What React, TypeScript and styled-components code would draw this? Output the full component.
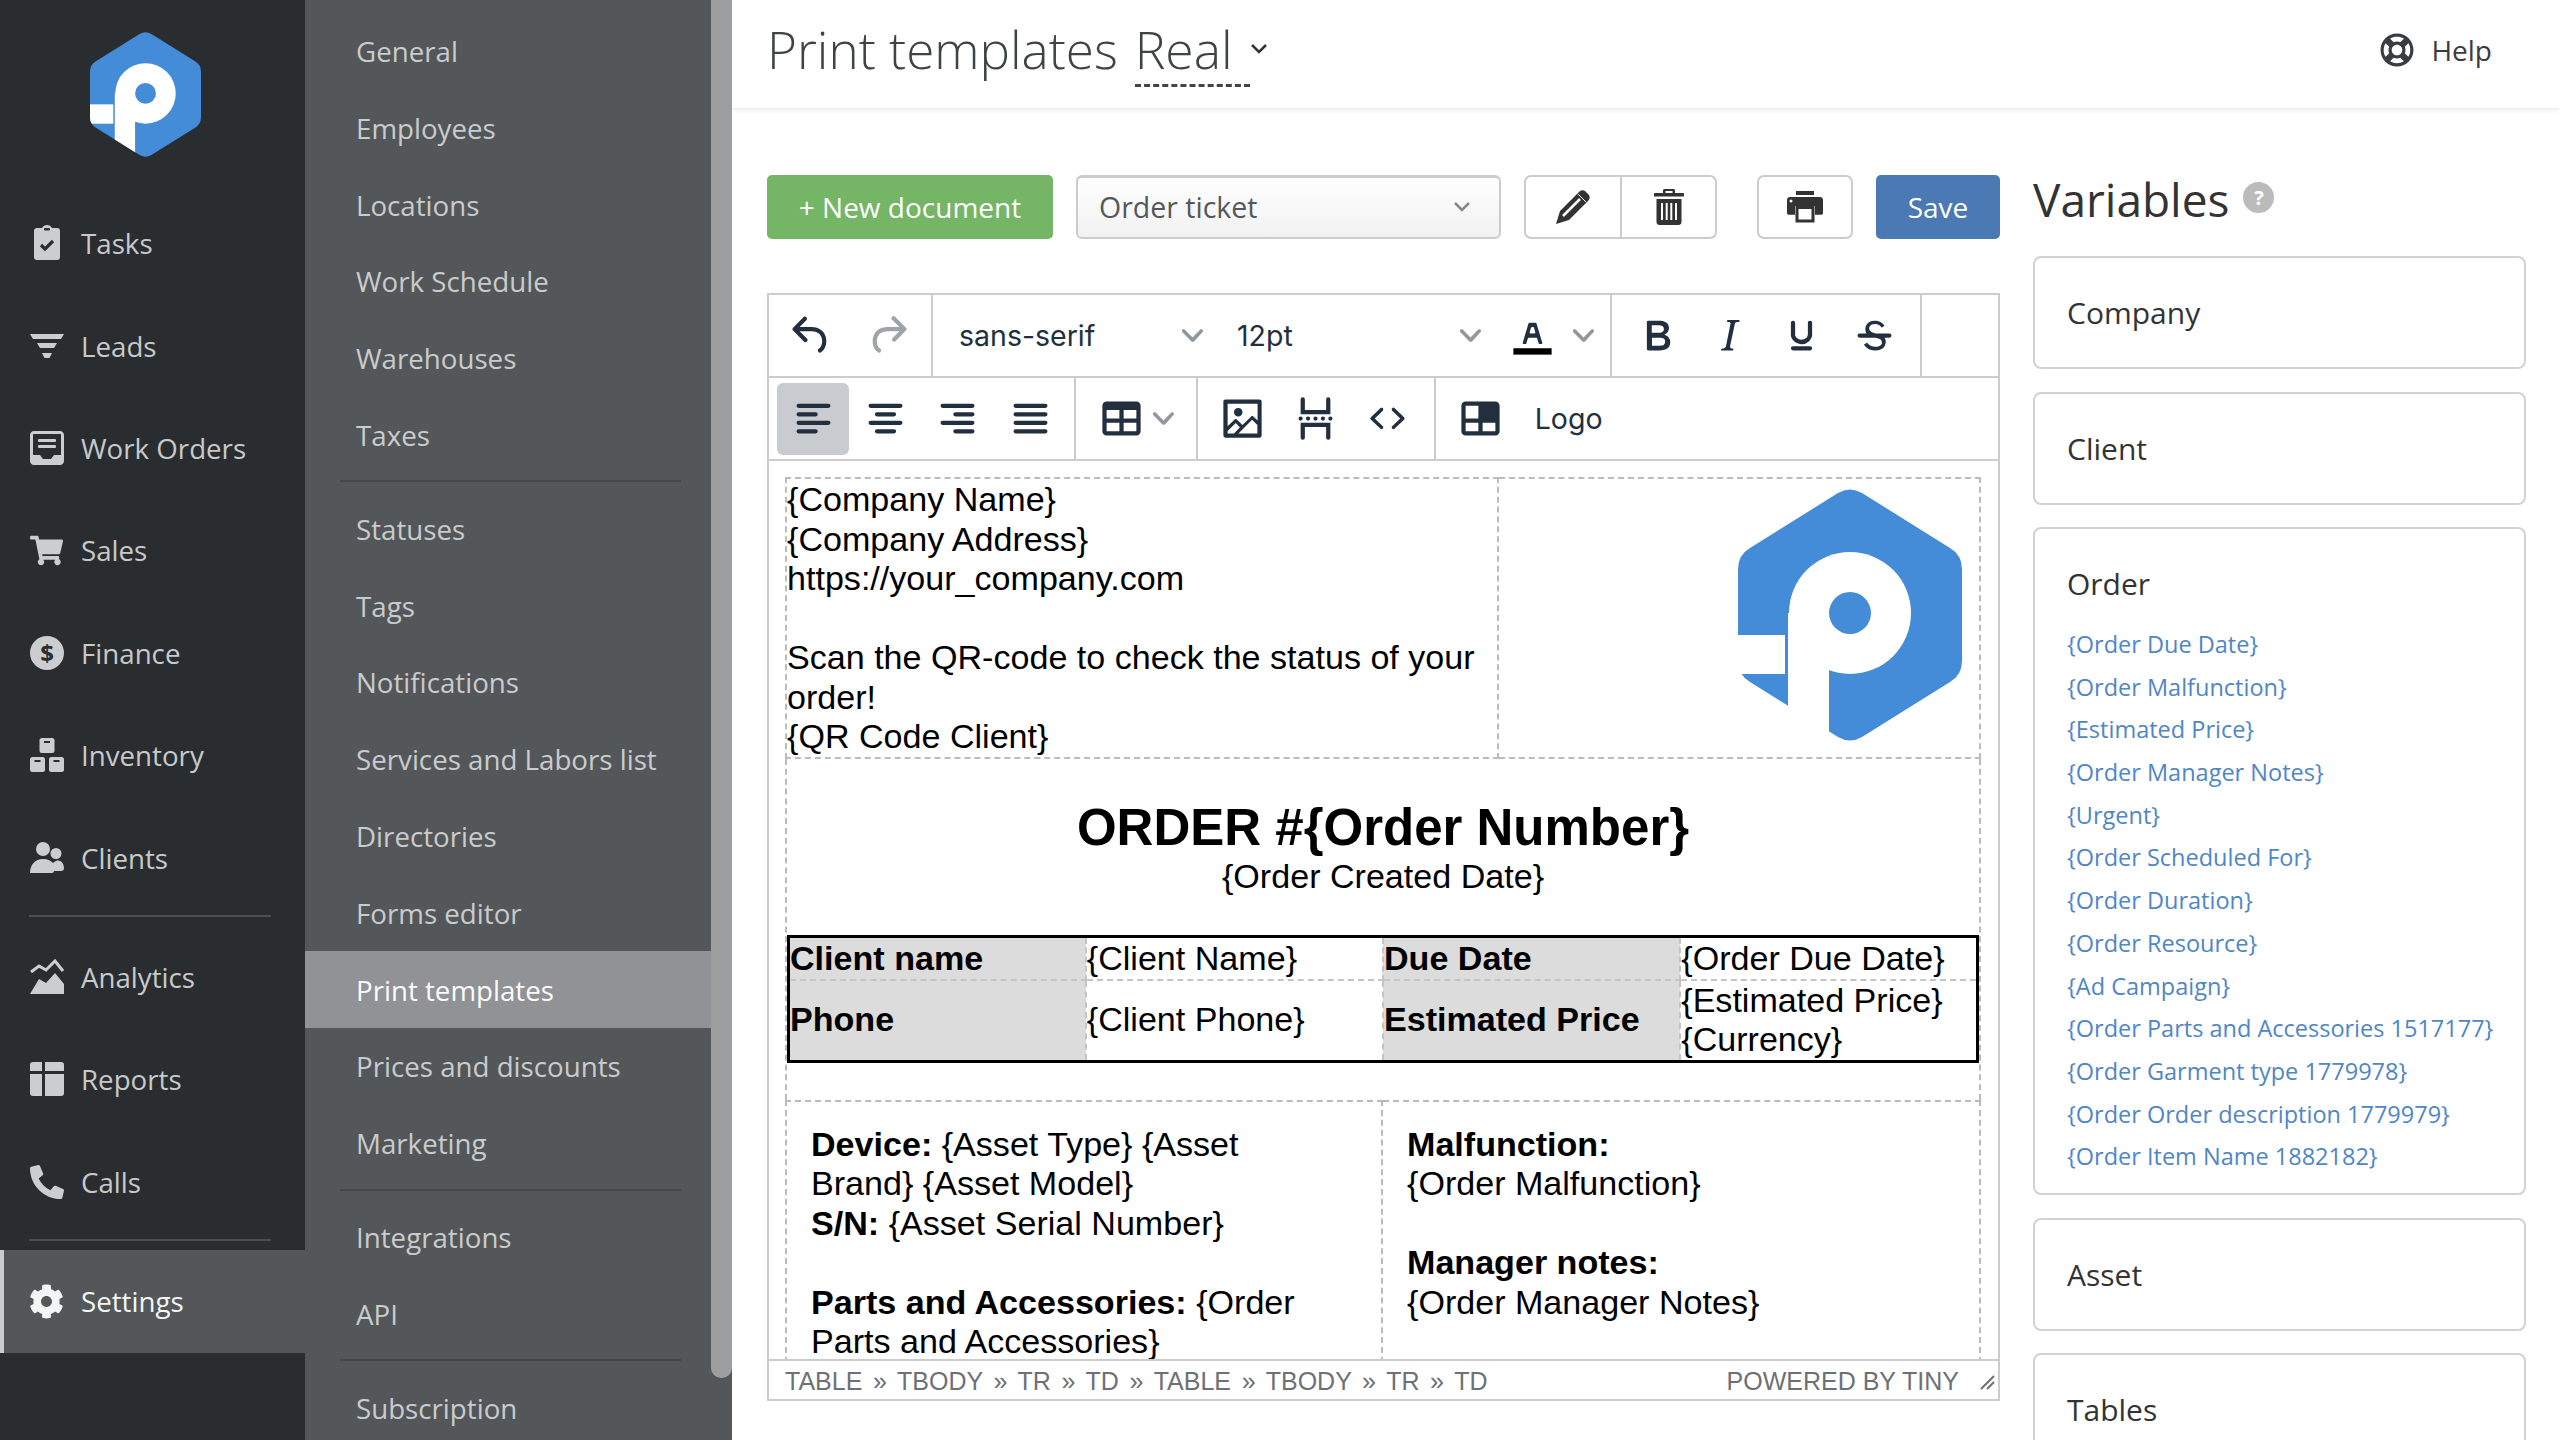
import React from "react";
import styled, { createGlobalStyle } from "styled-components";
import { FaShoppingCart, FaCog, FaRegLifeRing, FaPhoneAlt } from "react-icons/fa";

const Global = createGlobalStyle`
  html, body { margin: 0; padding: 0; height: 1440px; overflow: hidden; background: #fff; }
  body { font-family: "Open Sans", "Liberation Sans", sans-serif; }
  * { box-sizing: border-box; }
`;

const Page = styled.div`
  display: flex;
  width: 2560px;
  height: 1440px;
  overflow: hidden;
`;

/* ---------- primary nav ---------- */
const Nav = styled.nav`
  width: 305px;
  flex: none;
  background: #2a2d30;
  display: flex;
  flex-direction: column;
`;
const LogoBox = styled.div`
  height: 192px;
  padding: 32px 0 0 90px;
`;
const NavRow = styled.div<{ $active?: boolean }>`
  height: ${(p) => (p.$active ? "103px" : "102.4px")};
  display: flex;
  align-items: center;
  gap: 17px;
  padding-left: ${(p) => (p.$active ? "25px" : "29px")};
  font-size: 27.7px;
  color: ${(p) => (p.$active ? "#f4f5f5" : "#c7c9cb")};
  background: ${(p) => (p.$active ? "#53575a" : "transparent")};
  border-left: ${(p) => (p.$active ? "4px solid #c9cbcd" : "none")};
  flex: none;
`;
const NavIconBox = styled.span`
  width: 35px;
  height: 36px;
  display: flex;
  align-items: center;
  justify-content: center;
  flex: none;
  color: #cbcdcf;
`;
const NavDivider = styled.div<{ $after: number }>`
  height: 2px;
  width: 242px;
  margin: 6px 0 ${(p) => p.$after}px 29px;
  background: #4c5053;
  flex: none;
`;

/* ---------- secondary nav ---------- */
const SubPanel = styled.aside`
  width: 427px;
  flex: none;
  background: #53575a;
  display: flex;
`;
const SubList = styled.div`
  width: 406px;
  padding-top: 12.6px;
  flex: none;
`;
const SubRow = styled.div<{ $active?: boolean }>`
  height: 76.8px;
  display: flex;
  align-items: center;
  padding-left: 51px;
  font-size: 27.7px;
  color: ${(p) => (p.$active ? "#fbfbfb" : "#c9cbcc")};
  background: ${(p) => (p.$active ? "#909295" : "transparent")};
`;
const SubDivider = styled.div`
  height: 2px;
  margin: 7px 30px 8px 35px;
  background: #43474a;
`;
const ScrollThumb = styled.div`
  width: 21px;
  height: 1378px;
  background: #9c9e9f;
  border-radius: 0 0 10px 10px;
  flex: none;
`;

/* ---------- main ---------- */
const Main = styled.main`
  flex: 1;
  min-width: 0;
  display: flex;
  flex-direction: column;
  overflow: hidden;
`;
const Header = styled.header`
  height: 108px;
  flex: none;
  display: flex;
  align-items: flex-start;
  padding: 14px 68px 0 35px;
  box-shadow: 0 2px 5px rgba(0, 0, 0, 0.09);
  color: #3f4346;
`;
const Title = styled.h1`
  margin: 0 17px 0 0;
  font-size: 51.2px;
  font-weight: 300;
  line-height: 70px;
`;
const TitleSelect = styled.span`
  font-size: 51.5px;
  font-weight: 300;
  line-height: 70px;
  height: 73px;
  border-bottom: 3px dashed #444;
  width: 115px;
`;
const TitleCaret = styled.svg`
  margin: 29px 0 0 0;
`;
const HelpLink = styled.div`
  margin-left: auto;
  height: 72px;
  display: flex;
  align-items: center;
  gap: 17px;
  font-size: 28px;
  color: #3a3d40;
`;
const Body = styled.div`
  flex: 1;
  min-height: 0;
  display: flex;
  gap: 33px;
  padding: 67px 34px 0 35px;
`;
const LeftCol = styled.div`
  width: 1233px;
  flex: none;
`;
const RightCol = styled.div`
  flex: 1;
  min-width: 0;
`;
const ActionBar = styled.div`
  height: 64px;
  display: flex;
  margin-bottom: 54px;
`;
const SolidButton = styled.button<{ $color: string; $width: number; $gap: number }>`
  width: ${(p) => p.$width}px;
  margin-right: ${(p) => p.$gap}px;
  height: 64px;
  border: none;
  border-radius: 5px;
  background: ${(p) => p.$color};
  color: #fff;
  font: 500 28px "Open Sans", sans-serif;
  padding: 0;
`;
const SelectBox = styled.div`
  width: 425px;
  margin-right: 23px;
  height: 64px;
  border: 2px solid #ccc;
  border-top-width: 3px;
  border-radius: 6px;
  background: linear-gradient(#fff, #f1f1f1);
  display: flex;
  align-items: center;
  justify-content: space-between;
  padding: 0 27px 2px 21px;
  font-size: 28.5px;
  color: #55585b;
`;
const IconGroup = styled.div<{ $gap: number }>`
  display: flex;
  height: 64px;
  margin-right: ${(p) => p.$gap}px;
  border: 2px solid #ccc;
  border-radius: 7px;
`;
const IconButton = styled.div<{ $width: number; $split?: boolean }>`
  width: ${(p) => p.$width}px;
  display: flex;
  align-items: center;
  justify-content: center;
  border-left: ${(p) => (p.$split ? "2px solid #ccc" : "none")};
`;

/* ---------- editor ---------- */
const Editor = styled.div`
  height: 1108px;
  border: 2px solid #ccc;
  display: flex;
  flex-direction: column;
`;
const ToolRow = styled.div`
  height: 83px;
  flex: none;
  display: flex;
  border-bottom: 2px solid #ccc;
`;
const ToolGroup = styled.div<{ $pl: number; $pr?: number }>`
  display: flex;
  align-items: center;
  padding: 0 ${(p) => p.$pr ?? 0}px 0 ${(p) => p.$pl}px;
  border-right: 2px solid #ccc;
  flex: none;
`;
const LastGroup = styled(ToolGroup)`
  border-right: none;
`;
const ToolButton = styled.div<{ $w?: number; $active?: boolean }>`
  width: ${(p) => p.$w ?? 72.4}px;
  height: 72px;
  display: flex;
  align-items: center;
  justify-content: center;
  border-radius: 6px;
  background: ${(p) => (p.$active ? "#c8cbcf" : "transparent")};
  flex: none;
`;
const FontSelect = styled.div`
  width: 278px;
  height: 72px;
  display: flex;
  align-items: center;
  justify-content: space-between;
  padding: 0 8px 0 26px;
  font: 400 28.5px Inter, "Liberation Sans", sans-serif;
  color: #222f3e;
  flex: none;
`;
const ToolLabel = styled.span`
  font: 400 28.5px Inter, "Liberation Sans", sans-serif;
  color: #222f3e;
  margin-left: 18px;
`;
const Chevron = styled.svg<{ $ml?: number }>`
  fill: rgba(34, 47, 62, 0.5);
  margin-left: ${(p) => p.$ml ?? 0}px;
  flex: none;
`;
const Content = styled.div`
  flex: 1;
  min-height: 0;
  overflow: hidden;
  padding: 16px 17px 0 16px;
  font: 400 34.1px/39.5px "Liberation Sans", Arial, sans-serif;
  color: #000;
`;
const DocTable = styled.table`
  width: 100%;
  table-layout: fixed;
  border-collapse: collapse;
  & > tbody > tr > td {
    border: 2px dashed #bbb;
    vertical-align: top;
  }
`;
const PlainCell = styled.td<{ $width?: number }>`
  padding: 1px 0 0 0;
  width: ${(p) => (p.$width ? `${p.$width}px` : "auto")};
  height: 279px;
`;
const LogoCell = styled.td`
  padding: 10px 17px 0 0;
  text-align: right;
`;
const PadCell = styled.td<{ $width?: number }>`
  padding: 23px 48px 0 24px;
  height: 320px;
  width: ${(p) => (p.$width ? `${p.$width}px` : "auto")};
`;
const Line = styled.div`
  min-height: 39.5px;
`;
const Middle = styled.div`
  height: 341px;
  border-left: 2px dashed #bbb;
  border-right: 2px dashed #bbb;
  padding-top: 39px;
`;
const OrderTitle = styled.div`
  font-size: 51px;
  font-weight: 700;
  line-height: 59px;
  text-align: center;
`;
const OrderDate = styled.div`
  text-align: center;
  line-height: 39px;
  margin-bottom: 39.5px;
`;
const InfoTable = styled.table`
  width: 100%;
  table-layout: fixed;
  border-collapse: collapse;
  border: 3px solid #000;
`;
const InfoCell = styled.td<{ $label?: boolean; $tall?: boolean }>`
  background: ${(p) => (p.$label ? "#dcdcdc" : "#fff")};
  font-weight: ${(p) => (p.$label ? 700 : 400)};
  border: 2px dashed #c4c4c4;
  padding: 0;
  height: ${(p) => (p.$tall ? "80px" : "43px")};
`;
const StatusBar = styled.div`
  height: 40px;
  flex: none;
  border-top: 2px solid #ccc;
  display: flex;
  align-items: center;
  padding: 2px 2px 0 16px;
  font: 400 25px "Liberation Sans", Arial, sans-serif;
  color: #6d7176;
`;
const CrumbPath = styled.span`
  word-spacing: 3.7px;
`;
const PoweredBy = styled.span`
  margin-left: auto;
  margin-right: 17px;
`;

/* ---------- variables ---------- */
const VarHead = styled.div`
  height: 48px;
  margin-bottom: 33px;
  display: flex;
  align-items: center;
  gap: 14px;
  font-size: 46px;
  font-weight: 400;
  color: #333;
`;
const HintDot = styled.span`
  width: 31px;
  height: 31px;
  border-radius: 50%;
  background: #bbb;
  color: #fff;
  font-size: 20px;
  font-weight: 700;
  display: flex;
  align-items: center;
  justify-content: center;
  margin-top: -3px;
`;
const Card = styled.section<{ $open?: boolean }>`
  border: 2px solid #d2d2d2;
  border-radius: 8px;
  padding: ${(p) => (p.$open ? "35px 32px 0" : "0 32px")};
  height: ${(p) => (p.$open ? "668px" : "113px")};
  margin-bottom: 22.5px;
  display: ${(p) => (p.$open ? "block" : "flex")};
  align-items: center;
  font-size: 30px;
  color: #333;
`;
const CardTitle = styled.div`
  font-size: 30px;
  line-height: 40px;
  margin-bottom: 19px;
`;
const VarLink = styled.div`
  height: 42.7px;
  line-height: 42.7px;
  font-size: 23.5px;
  color: #4f86c6;
  white-space: nowrap;
`;

/* ---------- drawings ---------- */
const Logo = ({ size, onWhite }: { size: number; onWhite?: boolean }) => {
  const id = `hex${size}`;
  const hex =
    "M100 2Q112 -5 124 2L212 57Q224 64 224 78V170Q224 184 212 191L124 246Q112 253 100 246L12 191Q0 184 0 170V78Q0 64 12 57Z";
  return (
    <svg width={size} height={(size * 252) / 224} viewBox="0 -2 224 252">
      <defs>
        <clipPath id={id}>
          <path d={hex} />
        </clipPath>
      </defs>
      <path d={hex} fill="#448bd8" />
      <g clipPath={onWhite ? undefined : `url(#${id})`} fill="#fff">
        <circle cx="112" cy="122" r="61" />
        <rect x="50" y="122" width="41" height="130" />
        <rect x={onWhite ? -2 : 0} y="144" width={onWhite ? 49 : 47} height="39" />
      </g>
      <circle cx="112" cy="122" r="21" fill="#448bd8" />
    </svg>
  );
};

const NI = ({ children }: { children: React.ReactNode }) => (
  <svg width="34" height="36" viewBox="0 0 34 36" fill="currentColor">
    {children}
  </svg>
);

const navIcons: Record<string, React.ReactNode> = {
  Tasks: (
    <NI>
      <path d="M7 3h5c1-2 3-3 5-3s4 1 5 3h5c2 0 3 1 3 3v26c0 2-1 3-3 3H7c-2 0-3-1-3-3V6c0-2 1-3 3-3z" />
      <rect x="14" y="3" width="6" height="2.4" rx="1.2" fill="#2a2d30" />
      <path d="M11 20l4 4 8-8" fill="none" stroke="#2a2d30" strokeWidth="3.2" />
    </NI>
  ),
  Leads: (
    <NI>
      <path d="M0 6h34l-3 5H3zM7 15h20l-3 5H10zM12 25h10l-2.5 5h-5z" />
    </NI>
  ),
  "Work Orders": (
    <NI>
      <path fillRule="evenodd" d="M4 1h26c2.2 0 4 1.8 4 4v26c0 2.2-1.800 4-4 4H4c-2.200 0-4-1.800-4-4V5c0-2.200 1.800-4 4-4zM3 5v20h7l3 4h8l3-4h7V5c0-.6-.4-1-1-1H4c-.6 0-1 .4-1 1z" />
      <rect x="8" y="9" width="18" height="3" rx="1" />
      <rect x="8" y="15" width="18" height="3" rx="1" />
    </NI>
  ),
  Sales: <FaShoppingCart size={33} />,
  Finance: (
    <NI>
      <circle cx="17" cy="18" r="17" />
      <text x="17" y="26.500" textAnchor="middle" fontSize="24" fontWeight="700" fill="#2a2d30" fontFamily="Open Sans, sans-serif">$</text>
    </NI>
  ),
  Inventory: (
    <NI>
      <rect x="9.500" y="1" width="15" height="15" rx="2.500" />
      <rect x="0" y="20" width="15" height="15" rx="2.500" />
      <rect x="19" y="20" width="15" height="15" rx="2.500" />
      <rect x="14" y="4" width="6" height="2" fill="#2a2d30" />
      <rect x="4.500" y="23" width="6" height="2" fill="#2a2d30" />
      <rect x="23.500" y="23" width="6" height="2" fill="#2a2d30" />
    </NI>
  ),
  Clients: (
    <NI>
      <circle cx="13" cy="9" r="7" />
      <circle cx="26" cy="13.500" r="5.500" />
      <path d="M0 33c0-8 5-14 13-14 5 0 8 2 10 4 2-2 4-2.500 5-2.500 3.500 0 6 3.500 6 7.500 0 2-1 3-3 3H24c0 1-1 2-2 2H2c-1 0-2 0-2 0z" />
    </NI>
  ),
  Analytics: (
    <NI>
      <path d="M1 13l8-6 7 4 9-9 8 10" fill="none" stroke="currentColor" strokeWidth="3" />
      <path d="M0 35l9-15 7 4 9-10 9 11v10z" />
    </NI>
  ),
  Reports: (
    <NI>
      <path d="M3 1h9v9H0V4c0-2 1-3 3-3zM15 1h16c2 0 3 1 3 3v6H15zM0 13h12v22H3c-2 0-3-1-3-3zM15 13h19v19c0 2-1 3-3 3H15z" />
    </NI>
  ),
  Calls: <FaPhoneAlt size={34} />,
  Settings: <FaCog size={35} color="#f4f5f5" />,
};

const Pencil = () => (
  <svg width="36" height="36" viewBox="0 0 36 36">
    <path d="M1 35l4-13L24 3c2-2 4-2 6-1l4 4c1 2 1 4-1 6L14 31z" fill="#333" />
    <path d="M8 27L25 10" stroke="#fff" strokeWidth="2.500" />
    <path d="M23 5l8 8" stroke="#fff" strokeWidth="1" />
  </svg>
);
const Trash = () => (
  <svg width="30" height="36" viewBox="0 0 30 36">
    <path d="M9 4V1.500C9 .7 9.700 0 10.500 0h9c.8 0 1.500.7 1.500 1.500V4h8c.6 0 1 .4 1 1v2.500H0V5c0-.6.4-1 1-1zM11.500 4h7V2h-7z" fill="#333" fillRule="evenodd" />
    <path d="M2.500 10h25v23c0 1.700-1.300 3-3 3h-19c-1.700 0-3-1.300-3-3z" fill="#333" />
    <path d="M8 14v17M12.700 14v17M17.300 14v17M22 14v17" stroke="#fff" strokeWidth="2" />
  </svg>
);
const Printer = () => (
  <svg width="36" height="32" viewBox="0 0 36 32">
    <rect x="9" y="0" width="18" height="4" fill="#333" />
    <path d="M3 6h30c1.700 0 3 1.300 3 3v13c0 1-.7 1.700-1.700 1.700H28V15H8v8.700H1.700C.7 23.700 0 23 0 22V9c0-1.700 1.300-3 3-3z" fill="#333" />
    <circle cx="4" cy="10" r="1.500" fill="#fff" />
    <path d="M10 16.500h16V30H10z" fill="#fff" stroke="#333" strokeWidth="3" />
  </svg>
);

const T = ({ d, fill = "#222f3e", rule = "evenodd" }: { d: string; fill?: string; rule?: "evenodd" | "nonzero" }) => (
  <svg width="51" height="51" viewBox="0 0 24 24" fill={fill}>
    <path d={d} fillRule={rule} />
  </svg>
);
const Chev = ({ ml }: { ml?: number }) => (
  <Chevron $ml={ml} width="21" height="21" viewBox="0 0 10 10">
    <path d="M8.700 2.200c.3-.3.8-.3 1 0 .4.4.4.9 0 1.200L5.700 7.800c-.3.3-.9.3-1.200 0L.2 3.400a.8.8 0 0 1 0-1.200c.3-.3.8-.3 1.100 0L5 6l3.700-3.800z" />
  </Chevron>
);
const P = {
  undo: "M6.400 8H12c3.700 0 6.200 2 6.800 5.100.6 2.700-.4 5.600-2.300 6.800a1 1 0 0 1-1-1.800c1.100-.6 1.800-2.700 1.400-4.600-.5-2.100-2.100-3.500-4.900-3.500H6.400l3.300 3.300a1 1 0 1 1-1.400 1.400l-5-5a1 1 0 0 1 0-1.400l5-5a1 1 0 0 1 1.400 1.400L6.400 8z",
  redo: "M17.600 10H12c-2.800 0-4.400 1.400-4.900 3.500-.4 2 .3 4 1.400 4.600a1 1 0 1 1-1 1.800c-2-1.200-2.900-4.100-2.300-6.800.6-3 3-5.100 6.800-5.100h5.600l-3.300-3.300a1 1 0 1 1 1.400-1.400l5 5a1 1 0 0 1 0 1.400l-5 5a1 1 0 0 1-1.400-1.400l3.300-3.300z",
  bold: "M7.800 19c-.3 0-.5 0-.6-.2l-.2-.5V5.700c0-.2 0-.4.2-.5l.6-.2h5c1.500 0 2.700.3 3.500 1 .7.600 1.100 1.400 1.100 2.500a3 3 0 0 1-.6 1.900c-.4.600-1 1-1.600 1.200.4.100.9.300 1.300.6s.8.7 1 1.200c.4.400.5 1 .5 1.600 0 1.300-.4 2.300-1.300 3-.8.700-2.100 1-3.800 1H7.800zm5-8.300c.6 0 1.200-.1 1.600-.5.4-.3.6-.7.6-1.300 0-1.100-.8-1.700-2.300-1.700H9.300v3.500h3.400zm.5 6c.7 0 1.300-.1 1.700-.4.4-.4.600-.9.600-1.500s-.2-1-.7-1.400c-.4-.3-1-.4-2-.4H9.400v3.800h4z",
  italic: "M16.700 4.700l-.1.9h-.3c-.6 0-1 0-1.400.3-.3.3-.4.6-.5 1.100l-2.100 9.800v.6c0 .5.4.8 1.400.8h.2l-.2.8H8l.2-.8h.2c1.100 0 1.800-.5 2-1.500l2-9.800.1-.5c0-.6-.4-.8-1.400-.8h-.3l.2-.9h5.800z",
  underline: "M16 5c.6 0 1 .4 1 1v5.500a4 4 0 0 1-.4 1.800l-1 1.400a5.300 5.300 0 0 1-5.500 1 5 5 0 0 1-1.600-1c-.5-.4-.8-.9-1.100-1.400a4 4 0 0 1-.4-1.800V6c0-.6.4-1 1-1s1 .4 1 1v5.500c0 .3 0 .6.2 1l.6.7a3.300 3.300 0 0 0 2.200.8 3.400 3.400 0 0 0 2.200-.8c.3-.2.4-.5.6-.8l.2-.9V6c0-.6.4-1 1-1zM8 17h8c.6 0 1 .4 1 1s-.4 1-1 1H8a1 1 0 0 1 0-2z",
  strike: "M15.600 8.500c-.5-.7-1-1.100-1.300-1.300-.6-.4-1.300-.6-2-.6-2.700 0-2.800 1.700-2.800 2.100 0 1.600 1.800 2 3.200 2.300 4.400.9 4.600 2.800 4.600 3.900 0 1.400-.7 4.100-5 4.100A6.200 6.200 0 0 1 7 16.400l1.500-1.100c.4.600 1.600 2 3.700 2 1.600 0 2.500-.4 3-1 .3-.4.3-.7.3-1 0-1-.3-1.700-3-2.300-1.900-.4-4.800-1-4.800-4 0-.2 0-3.900 4.500-3.900 1.200 0 2.200.3 3 .8.500.4 1 .8 1.500 1.500l-1.400 1zM5 11h14a1 1 0 0 1 0 2H5a1 1 0 0 1 0-2z",
  left: "M5 5h14a1 1 0 0 1 0 2H5a1 1 0 0 1 0-2zm0 4h8a1 1 0 0 1 0 2H5a1 1 0 0 1 0-2zm0 4h14a1 1 0 0 1 0 2H5a1 1 0 0 1 0-2zm0 4h8a1 1 0 0 1 0 2H5a1 1 0 0 1 0-2z",
  center: "M5 5h14a1 1 0 0 1 0 2H5a1 1 0 0 1 0-2zm3 4h8a1 1 0 0 1 0 2H8a1 1 0 0 1 0-2zm-3 4h14a1 1 0 0 1 0 2H5a1 1 0 0 1 0-2zm3 4h8a1 1 0 0 1 0 2H8a1 1 0 0 1 0-2z",
  right: "M5 5h14a1 1 0 0 1 0 2H5a1 1 0 0 1 0-2zm6 4h8a1 1 0 0 1 0 2h-8a1 1 0 0 1 0-2zm-6 4h14a1 1 0 0 1 0 2H5a1 1 0 0 1 0-2zm6 4h8a1 1 0 0 1 0 2h-8a1 1 0 0 1 0-2z",
  justify: "M5 5h14a1 1 0 0 1 0 2H5a1 1 0 0 1 0-2zm0 4h14a1 1 0 0 1 0 2H5a1 1 0 0 1 0-2zm0 4h14a1 1 0 0 1 0 2H5a1 1 0 0 1 0-2zm0 4h14a1 1 0 0 1 0 2H5a1 1 0 0 1 0-2z",
  table: "M19 4a2 2 0 0 1 2 2v12a2 2 0 0 1-2 2H5a2 2 0 0 1-2-2V6c0-1.100.9-2 2-2h14zM5 14v4h6v-4H5zm14 0h-6v4h6v-4zm0-6h-6v4h6V8zM5 12h6V8H5v4z",
  image: "M5 15.700l3.300-3.200c.3-.3.7-.3 1 0L12 15l4.100-4c.3-.4.8-.4 1 0l2 1.900V5H5v10.700zM5 18V19h3l2.800-2.900-2-2L5 17.900zm14-3l-2.500-2.400-6.400 6.500H19v-4zM4 3h16c.6 0 1 .4 1 1v16c0 .6-.4 1-1 1H4a1 1 0 0 1-1-1V4c0-.6.4-1 1-1zm6 8a2 2 0 1 0 0-4 2 2 0 0 0 0 4z",
  pagebreak: "M5 11a1 1 0 1 1 0 2 1 1 0 0 1 0-2zm3.500 0a1 1 0 1 1 0 2 1 1 0 0 1 0-2zm3.500 0a1 1 0 1 1 0 2 1 1 0 0 1 0-2zm3.500 0a1 1 0 1 1 0 2 1 1 0 0 1 0-2zm3.500 0a1 1 0 1 1 0 2 1 1 0 0 1 0-2zM7 3v5h10V3a1 1 0 0 1 2 0v7H5V3a1 1 0 0 1 2 0zM6 22a1 1 0 0 1-1-1v-7h14v7a1 1 0 0 1-2 0v-5H7v5a1 1 0 0 1-1 1z",
  code: "M9.800 15.700c.3.3.3.8 0 1-.3.4-.9.4-1.200 0l-4.400-4.100a.8.8 0 0 1 0-1.200l4.400-4.200c.3-.3.9-.3 1.200 0 .3.3.3.8 0 1.100L6 12l3.800 3.700zM14.200 15.700c-.3.3-.3.8 0 1 .4.4.9.4 1.200 0l4.400-4.100c.3-.3.3-.9 0-1.200l-4.400-4.200a.8.8 0 0 0-1.200 0c-.3.3-.3.8 0 1.100L18 12l-3.800 3.700z",
  template: "M19 4a2 2 0 0 1 2 2v12a2 2 0 0 1-2 2H5a2 2 0 0 1-2-2V6c0-1.100.9-2 2-2h14zM5 14v4h6v-4H5zm14 0h-6v4h6v-4zM5 12h6V6H5v6z",
  colorA: "M8.700 16h-.8a.5.5 0 0 1-.5-.6l2.700-9c.1-.3.3-.4.5-.4h2.800c.2 0 .4.1.5.4l2.700 9a.5.5 0 0 1-.5.6h-.8a.5.5 0 0 1-.4-.4l-.7-2.200c0-.3-.3-.4-.5-.4h-3.400c-.2 0-.4.1-.5.4l-.7 2.200c0 .3-.2.4-.4.4zm2.600-7.600l-.6 2a.5.5 0 0 0 .5.6h1.600a.5.5 0 0 0 .5-.6l-.6-2c0-.3-.3-.4-.5-.4h-.4c-.2 0-.4.1-.5.4z",
};

const firstNav = ["Tasks", "Leads", "Work Orders", "Sales", "Finance", "Inventory", "Clients"];
const secondNav = ["Analytics", "Reports", "Calls"];
const subGroups = [
  ["General", "Employees", "Locations", "Work Schedule", "Warehouses", "Taxes"],
  ["Statuses", "Tags", "Notifications", "Services and Labors list", "Directories", "Forms editor", "Print templates", "Prices and discounts", "Marketing"],
  ["Integrations", "API"],
  ["Subscription"],
];
const orderVars = [
  "{Order Due Date}", "{Order Malfunction}", "{Estimated Price}", "{Order Manager Notes}", "{Urgent}",
  "{Order Scheduled For}", "{Order Duration}", "{Order Resource}", "{Ad Campaign}",
  "{Order Parts and Accessories 1517177}", "{Order Garment type 1779978}",
  "{Order Order description 1779979}", "{Order Item Name 1882182}",
];

const NavItem = ({ name, active }: { name: string; active?: boolean }) => (
  <NavRow $active={active}>
    <NavIconBox>{navIcons[name]}</NavIconBox>
    {name}
  </NavRow>
);

export default function App() {
  return (
    <Page>
      <Global />
      <Nav>
        <LogoBox>
          <Logo size={111} />
        </LogoBox>
        {firstNav.map((n) => <NavItem key={n} name={n} />)}
        <NavDivider $after={9} />
        {secondNav.map((n) => <NavItem key={n} name={n} />)}
        <NavDivider $after={9} />
        <NavItem name="Settings" active />
      </Nav>
      <SubPanel>
        <SubList>
          {subGroups.map((g, i) => (
            <React.Fragment key={i}>
              {i > 0 && <SubDivider />}
              {g.map((n) => <SubRow key={n} $active={n === "Print templates"}>{n}</SubRow>)}
            </React.Fragment>
          ))}
        </SubList>
        <ScrollThumb />
      </SubPanel>
      <Main>
        <Header>
          <Title>Print templates</Title>
          <TitleSelect>Real</TitleSelect>
          <TitleCaret width="18" height="12" viewBox="0 0 18 12">
            <path d="M2 2l7 7 7-7" fill="none" stroke="#333" strokeWidth="2.500" />
          </TitleCaret>
          <HelpLink>
            <FaRegLifeRing size={34} />
            Help
          </HelpLink>
        </Header>
        <Body>
          <LeftCol>
            <ActionBar>
              <SolidButton $color="#74b566" $width={286} $gap={23}>+ New document</SolidButton>
              <SelectBox>
                Order ticket
                <svg width="20" height="14" viewBox="0 0 20 14">
                  <path d="M3 3l7 7 7-7" fill="none" stroke="#888" strokeWidth="2.500" />
                </svg>
              </SelectBox>
              <IconGroup $gap={40}>
                <IconButton $width={94}><Pencil /></IconButton>
                <IconButton $width={95} $split><Trash /></IconButton>
              </IconGroup>
              <IconGroup $gap={23}>
                <IconButton $width={92}><Printer /></IconButton>
              </IconGroup>
              <SolidButton $color="#4a79b4" $width={124} $gap={0}>Save</SolidButton>
            </ActionBar>
            <Editor>
              <ToolRow>
                <ToolGroup $pl={4} $pr={6}>
                  <ToolButton $w={76}><T d={P.undo} /></ToolButton>
                  <ToolButton $w={76}><T d={P.redo} fill="#a0a4a9" /></ToolButton>
                </ToolGroup>
                <ToolGroup $pl={0}>
                  <FontSelect>sans-serif<Chev /></FontSelect>
                  <FontSelect>12pt<Chev /></FontSelect>
                  <ToolButton $w={86}>
                    <svg width="51" height="51" viewBox="0 0 24 24">
                      <path d={P.colorA} fill="#222f3e" fillRule="evenodd" />
                      <rect x="3" y="18" width="18" height="3" fill="#000" />
                    </svg>
                  </ToolButton>
                  <Chev ml={-2} />
                  <ToolButton $w={16} />
                </ToolGroup>
                <ToolGroup $pl={9} $pr={9}>
                  <ToolButton><T d={P.bold} /></ToolButton>
                  <ToolButton><T d={P.italic} /></ToolButton>
                  <ToolButton><T d={P.underline} /></ToolButton>
                  <ToolButton><T d={P.strike} rule="nonzero" /></ToolButton>
                </ToolGroup>
              </ToolRow>
              <ToolRow>
                <ToolGroup $pl={8} $pr={7}>
                  <ToolButton $active><T d={P.left} /></ToolButton>
                  <ToolButton><T d={P.center} /></ToolButton>
                  <ToolButton><T d={P.right} /></ToolButton>
                  <ToolButton><T d={P.justify} /></ToolButton>
                </ToolGroup>
                <ToolGroup $pl={10} $pr={22}>
                  <ToolButton $w={72}><T d={P.table} /></ToolButton>
                  <Chev ml={-5} />
                </ToolGroup>
                <ToolGroup $pl={9} $pr={10}>
                  <ToolButton $w={72.4}><T d={P.image} /></ToolButton>
                  <ToolButton $w={72.4}><T d={P.pagebreak} /></ToolButton>
                  <ToolButton $w={72.4}><T d={P.code} /></ToolButton>
                </ToolGroup>
                <LastGroup $pl={9}>
                  <ToolButton $w={72}><T d={P.template} /></ToolButton>
                  <ToolLabel>Logo</ToolLabel>
                </LastGroup>
              </ToolRow>
              <Content>
                <DocTable>
                  <tbody>
                    <tr>
                      <PlainCell $width={712}>
                        <Line>{"{Company Name}"}</Line>
                        <Line>{"{Company Address}"}</Line>
                        <Line>https://your_company.com</Line>
                        <Line />
                        <Line>Scan the QR-code to check the status of your order!</Line>
                        <Line>{"{QR Code Client}"}</Line>
                      </PlainCell>
                      <LogoCell><Logo size={224} onWhite /></LogoCell>
                    </tr>
                  </tbody>
                </DocTable>
                <Middle>
                  <OrderTitle>{"ORDER #{Order Number}"}</OrderTitle>
                  <OrderDate>{"{Order Created Date}"}</OrderDate>
                  <InfoTable>
                    <tbody>
                      <tr>
                        <InfoCell $label>Client name</InfoCell>
                        <InfoCell>{"{Client Name}"}</InfoCell>
                        <InfoCell $label>Due Date</InfoCell>
                        <InfoCell>{"{Order Due Date}"}</InfoCell>
                      </tr>
                      <tr>
                        <InfoCell $label $tall>Phone</InfoCell>
                        <InfoCell $tall>{"{Client Phone}"}</InfoCell>
                        <InfoCell $label $tall>Estimated Price</InfoCell>
                        <InfoCell $tall>{"{Estimated Price}"}<br />{"{Currency}"}</InfoCell>
                      </tr>
                    </tbody>
                  </InfoTable>
                </Middle>
                <DocTable>
                  <tbody>
                    <tr>
                      <PadCell $width={596}>
                        <Line><b>Device:</b>{" {Asset Type} {Asset Brand} {Asset Model}"}</Line>
                        <Line><b>S/N:</b>{" {Asset Serial Number}"}</Line>
                        <Line />
                        <Line><b>Parts and Accessories:</b>{" {Order Parts and Accessories}"}</Line>
                      </PadCell>
                      <PadCell>
                        <Line><b>Malfunction:</b></Line>
                        <Line>{"{Order Malfunction}"}</Line>
                        <Line />
                        <Line><b>Manager notes:</b></Line>
                        <Line>{"{Order Manager Notes}"}</Line>
                      </PadCell>
                    </tr>
                  </tbody>
                </DocTable>
              </Content>
              <StatusBar>
                <CrumbPath>TABLE » TBODY » TR » TD » TABLE » TBODY » TR » TD</CrumbPath>
                <PoweredBy>POWERED BY TINY</PoweredBy>
                <svg width="20" height="20" viewBox="0 0 20 20">
                  <path d="M18 5L5 18M18 11l-7 7" stroke="#6d7176" strokeWidth="2" />
                </svg>
              </StatusBar>
            </Editor>
          </LeftCol>
          <RightCol>
            <VarHead>
              Variables
              <HintDot>?</HintDot>
            </VarHead>
            <Card>Company</Card>
            <Card>Client</Card>
            <Card $open>
              <CardTitle>Order</CardTitle>
              {orderVars.map((v) => <VarLink key={v}>{v}</VarLink>)}
            </Card>
            <Card>Asset</Card>
            <Card>Tables</Card>
          </RightCol>
        </Body>
      </Main>
    </Page>
  );
}
